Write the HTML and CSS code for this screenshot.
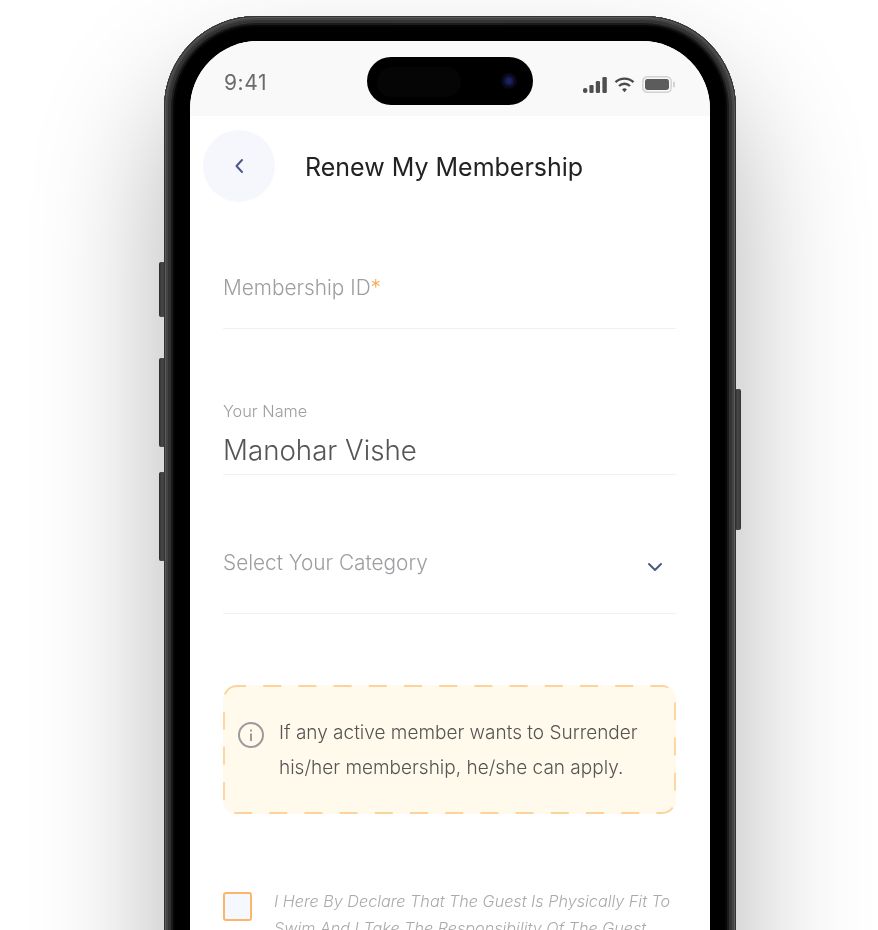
FILE: index.html
```html
<!DOCTYPE html>
<html lang="en">
<head>
<meta charset="utf-8">
<title>Renew My Membership</title>
<link rel="stylesheet" href="styles.css">
</head>
<body>
<div class="page">
  <div class="phone">
    <span class="side side-l1"></span>
    <span class="side side-l2"></span>
    <span class="side side-l3"></span>
    <span class="side side-r1"></span>
    <span class="speaker"></span>
    <div class="screen">
      <div class="island">
        <span class="island-inner"></span>
        <span class="camera"></span>
      </div>
      <div class="status">
        <span class="time">9:41</span>
        <div class="status-icons">
          <svg class="signal" width="24" height="16" viewBox="0 0 24 16"><rect x="0" y="11" width="4.4" height="5" rx="2"/><rect x="6.4" y="8" width="4.2" height="8" rx="1.2"/><rect x="12.8" y="4" width="4.2" height="12" rx="1.2"/><rect x="19.4" y="0" width="4.4" height="16" rx="1.2"/></svg>
          <svg class="wifi" width="21" height="16" viewBox="0 0 21 16"><path d="M1.5 5.2a13 13 0 0 1 18 0" fill="none" stroke="#4a4a4a" stroke-width="2.4"/><path d="M5 9a8 8 0 0 1 11 0" fill="none" stroke="#4a4a4a" stroke-width="2.4"/><path d="M8.1 12.4a3.5 3.5 0 0 1 4.8 0L10.5 15.2z" fill="#4a4a4a"/></svg>
          <svg class="battery" width="33" height="17" viewBox="0 0 33 17"><rect x="0.8" y="0.8" width="28.4" height="15.4" rx="4.5" fill="none" stroke="#d2d2d2" stroke-width="1.5"/><rect x="3" y="3" width="24" height="11" rx="2.4" fill="#5c5c5c"/><rect x="31" y="5.5" width="2" height="6" rx="1" fill="#d2d2d2"/></svg>
        </div>
      </div>
      <div class="header">
        <button class="back" type="button" aria-label="Back">
          <svg width="12" height="16" viewBox="0 0 12 16"><path d="M9 2 3.5 8 9 14" fill="none" stroke="#4d5a8a" stroke-width="2" stroke-linecap="round" stroke-linejoin="round"/></svg>
        </button>
        <h1 class="title">Renew My Membership</h1>
      </div>
      <form class="form">
        <div class="field field-id">
          <span class="placeholder">Membership ID<span class="req">*</span></span>
        </div>
        <div class="field field-name">
          <span class="mini-label">Your Name</span>
          <span class="value">Manohar Vishe</span>
        </div>
        <div class="field field-select">
          <span class="placeholder">Select Your Category</span>
          <svg class="chev" width="16" height="10" viewBox="0 0 16 10"><path d="M2 2 8 8 14 2" fill="none" stroke="#4d5a7d" stroke-width="2" stroke-linecap="round" stroke-linejoin="round"/></svg>
        </div>
        <div class="notice">
          <svg class="dashes" width="453" height="129" viewBox="0 0 453 129"><rect x="1" y="1" width="451" height="127" rx="13" fill="none" stroke="#fdd29c" stroke-width="1.8" stroke-dasharray="18 17.2" stroke-dashoffset="9"/></svg>
          <svg class="info" width="28" height="28" viewBox="0 0 28 28"><circle cx="14" cy="14" r="12" fill="none" stroke="#9b9b9b" stroke-width="2"/><rect x="13" y="12.5" width="2" height="7.5" fill="#9b9b9b"/><rect x="13" y="8.5" width="2" height="2" fill="#9b9b9b"/></svg>
          <p class="notice-text">If any active member wants to Surrender his/her membership, he/she can apply.</p>
        </div>
        <div class="declare">
          <span class="check"></span>
          <p class="declare-text">I Here By Declare That The Guest Is Physically Fit To Swim And I Take The Responsibility Of The Guest</p>
        </div>
      </form>
    </div>
  </div>
</div>
</body>
</html>
```

FILE: styles.css
```css
* { box-sizing: border-box; }
html, body { margin: 0; height: 930px; overflow: hidden; background: #fff; }
body { font-family: "Inter", "Liberation Sans", sans-serif; }
.page { width: 878px; height: 930px; overflow: hidden; padding: 16px 0 0 164px; }
.phone {
  position: relative;
  width: 572px;
  height: 1150px;
  padding: 25px 26px;
  background: #000;
  border-radius: 92px;
  box-shadow:
    inset 0 0 0 1px #333,
    inset 0 0 0 2px #5a5a5a,
    inset 0 0 0 4px #444,
    inset 0 0 0 7px #333,
    inset 0 0 0 9px #1a1a1a,
    inset 0 0 0 11px #060606,
    0 70px 130px 0 rgba(0,0,0,.3);
}
.side { position: absolute; width: 6px; background: linear-gradient(90deg,#2a2a2a,#4a4a4a 50%,#333); border-radius: 2px; }
.side-l1 { left: -5px; top: 246px; height: 55px; }
.side-l2 { left: -5px; top: 342px; height: 89px; }
.side-l3 { left: -5px; top: 456px; height: 89px; }
.side-r1 { right: -5px; top: 373px; height: 141px; }
.speaker { position: absolute; left: 228px; top: 7px; width: 112px; height: 2px; background: #1c1c1c; border-radius: 1px; }
.screen {
  position: relative;
  height: 100%;
  background: #fff;
  border-radius: 68px;
  overflow: hidden;
  filter: blur(.5px);
}
.status {
  height: 75px;
  background: #f9f9f9;
  display: flex;
  align-items: flex-start;
  justify-content: space-between;
  padding: 29px 35px 0 34px;
}
.time { line-height: 26px; color: #6b6b6b; letter-spacing: .6px; font-size: 21px; }
.status-icons { display: flex; align-items: center; gap: 7px; padding-top: 6px; }
.signal { fill: #4f4f4f; }
.island {
  position: absolute;
  left: 177px;
  top: 16px;
  width: 166px;
  height: 48px;
  background: #000;
  border-radius: 24px;
}
.island-inner { position: absolute; left: 10px; top: 10px; width: 84px; height: 30px; border-radius: 15px; background: #050505; }
.camera {
  position: absolute;
  right: 16px;
  top: 16px;
  width: 16px;
  height: 16px;
  border-radius: 50%;
  background: radial-gradient(circle, #1a2360 18%, #0a0a20 50%, #000 100%);
}
.header { display: flex; align-items: center; gap: 30px; padding: 14px 0 0 13px; }
.back {
  width: 72px;
  height: 72px;
  border: 0;
  padding: 0;
  border-radius: 50%;
  background: #f6f7fd;
  display: flex;
  align-items: center;
  justify-content: center;
}
.title { margin: 0; font-size: 25px; line-height: 30px; padding-top: 1px; font-weight: 400; color: #222; letter-spacing: 0; }
.form { padding: 0 34px 0 33px; }
.field { border-bottom: 1.5px solid #f0f1fb; position: relative; }
.field-id { margin-top: 70px; height: 57px; padding-top: 3px; }
.field-name { margin-top: 72px; height: 74px; display: flex; flex-direction: column; }
.field-select { margin-top: 66px; height: 73px; display: flex; justify-content: space-between; padding-top: 9px; }
.placeholder { font-size: 20.8px; line-height: 26px; font-weight: 300; color: #9d9da2; }
.req { color: #f5a94f; }
.mini-label { font-size: 16.3px; line-height: 20px; font-weight: 300; color: #9d9da2; }
.value { font-size: 27.7px; line-height: 36px; margin-top: 11px; font-weight: 300; color: #555; }
.chev { margin: 12px 13px 0 0; }
.notice {
  position: relative;
  margin-top: 71px;
  height: 129px;
  border-radius: 13px;
  background: #fffaeb;
  display: flex;
  align-items: flex-start;
  padding: 30px 30px 0 14px;
  gap: 14px;
}
.dashes { position: absolute; left: 0; top: 0; }
.info { flex: none; margin-top: 6px; }
.notice-text { margin: 0; font-size: 19px; line-height: 35px; font-weight: 300; color: #555; }
.declare { display: flex; gap: 22px; margin-top: 78px; }
.check { flex: none; width: 29px; height: 29px; border: 2px solid #fbb66c; border-radius: 3px; background: #f5f8fe; }
.declare-text { margin: -4px 0 0; font-size: 16.2px; line-height: 27px; font-weight: 300; font-style: italic; color: #aaa; }
```
